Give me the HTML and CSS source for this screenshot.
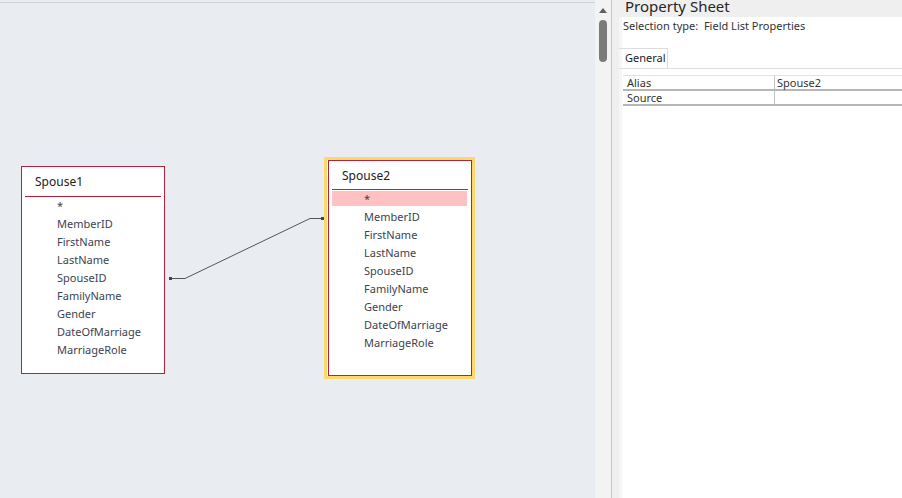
FILE: index.html
```html
<!DOCTYPE html>
<html>
<head>
<meta charset="utf-8">
<link rel="stylesheet" href="styles.css">
</head>
<body>
<div class="app">
  <div class="canvas">
    <div class="topline"></div>
    <svg class="joins" width="595" height="498" viewBox="0 0 595 498">
      <polyline points="170,278.5 185,278.5 310,218.5 323,218.5" fill="none" stroke="#555" stroke-width="1"/>
      <rect x="169" y="277" width="3" height="3" fill="#444"/>
      <rect x="321" y="217" width="3" height="3" fill="#444"/>
    </svg>
    <div class="fieldlist fl1">
      <div class="fl-title">Spouse1</div>
      <ul class="fl-fields">
        <li>*</li>
        <li>MemberID</li>
        <li>FirstName</li>
        <li>LastName</li>
        <li>SpouseID</li>
        <li>FamilyName</li>
        <li>Gender</li>
        <li>DateOfMarriage</li>
        <li>MarriageRole</li>
      </ul>
    </div>
    <div class="selected-frame">
      <div class="fieldlist fl2">
        <div class="fl-title">Spouse2</div>
        <ul class="fl-fields">
          <li class="hl">*</li>
          <li>MemberID</li>
          <li>FirstName</li>
          <li>LastName</li>
          <li>SpouseID</li>
          <li>FamilyName</li>
          <li>Gender</li>
          <li>DateOfMarriage</li>
          <li>MarriageRole</li>
        </ul>
      </div>
    </div>
  </div>
  <div class="vscroll">
    <div class="arrow-up"></div>
    <div class="thumb"></div>
  </div>
  <div class="divider"></div>
  <div class="panel">
    <div class="panel-title">Property Sheet</div>
    <div class="panel-body">
      <div class="seltype">Selection type:&nbsp;&nbsp;Field List Properties</div>
      <div class="tabs">
        <div class="tab">General</div>
      </div>
      <div class="props">
        <div class="prow"><div class="pname">Alias</div><div class="pval">Spouse2</div></div>
        <div class="prow"><div class="pname">Source</div><div class="pval"></div></div>
      </div>
    </div>
  </div>
</div>
</body>
</html>
```

FILE: styles.css
```css
html, body {
  margin: 0;
  padding: 0;
  width: 902px;
  height: 498px;
  overflow: hidden;
  font-family: "Noto Sans", "Open Sans", sans-serif;
}
.app {
  display: flex;
  width: 902px;
  height: 498px;
}
.canvas {
  position: relative;
  width: 595px;
  flex: none;
  height: 498px;
  background: #e9edf1;
}
.topline {
  margin-top: 2px;
  height: 1px;
  background: #d2d2d2;
}
.joins {
  position: absolute;
  left: 0;
  top: 0;
}
.fieldlist {
  position: absolute;
  box-sizing: border-box;
  background: #fff;
  border: 1px solid #b4233b;
}
.fl1 {
  left: 21px;
  top: 166px;
  width: 144px;
  height: 208px;
}
.selected-frame {
  position: absolute;
  left: 324px;
  top: 157px;
  width: 151px;
  height: 222px;
  box-sizing: border-box;
  border: 3px solid #fbd96a;
  background: #fff;
}
.fl2 {
  left: 1px;
  top: 0px;
  width: 144px;
  height: 216px;
}
.fl-title {
  margin: 0 3px;
  height: 29px;
  box-sizing: border-box;
  padding: 6px 0 0 10px;
  font-size: 12px;
  color: #222;
  border-bottom: 1px solid #b4233b;
}
.fl1 .fl-title {
  height: 30px;
}
.fl-fields {
  list-style: none;
  margin: 0;
  padding: 0;
}
.fl-fields li {
  height: 18px;
  line-height: 18px;
  font-size: 11px;
  color: #3c4350;
  padding-left: 32px;
  margin: 0 3px 0 3px;
}
.fl2 .fl-fields {
  padding-top: 1px;
}
.fl2 .fl-fields li {
  padding-left: 32px;
}
.fl2 .fl-fields li.hl {
  background: #ffc1c1;
  height: 15px;
  line-height: 15px;
  margin-bottom: 2px;
  margin-right: 4px;
}
.vscroll {
  position: relative;
  width: 16px;
  flex: none;
  background: #f3f3f3;
}
.arrow-up {
  position: absolute;
  left: 4px;
  top: 8px;
  width: 0;
  height: 0;
  border-left: 4px solid transparent;
  border-right: 4px solid transparent;
  border-bottom: 5px solid #606060;
}
.thumb {
  position: absolute;
  left: 4px;
  top: 20px;
  width: 8px;
  height: 42px;
  border-radius: 4px;
  background: #7b7b7b;
}
.divider {
  width: 1px;
  flex: none;
  background: #c6c6c6;
}
.panel {
  flex: 1;
  display: flex;
  flex-direction: column;
  background: #efefef;
  padding-left: 7px;
  min-width: 0;
}
.panel-title {
  height: 17px;
  line-height: 12px;
  padding-left: 6px;
  font-size: 15px;
  color: #262626;
  white-space: nowrap;
}
.panel-body {
  flex: 1;
  background: #fff;
  border-left: 3px solid #f6f6f6;
  padding-top: 1px;
}
.seltype {
  padding-left: 1px;
  height: 30px;
  font-size: 11px;
  line-height: 16px;
  color: #333;
  white-space: nowrap;
}
.tabs {
  display: flex;
  border-bottom: 1px solid #dedede;
  margin-left: -3px;
}
.tab {
  width: 42px;
  height: 19px;
  padding-left: 6px;
  line-height: 18px;
  font-size: 11px;
  color: #222;
  border-top: 1px solid #dcdcdc;
  border-right: 1px solid #dcdcdc;
}
.props {
  margin-top: 6px;
  margin-left: 1px;
  border-top: 1px solid #e2e2e2;
}
.prow {
  display: flex;
  height: 13px;
  border-bottom: 2px solid #b6b6b6;
}
.pname, .pval {
  font-size: 11px;
  line-height: 13px;
  color: #333;
  padding-left: 4px;
  white-space: nowrap;
}
.pname {
  width: 147px;
  border-right: 1px solid #c4c4c4;
}
.pval {
  flex: 1;
  padding-left: 2px;
}
```
